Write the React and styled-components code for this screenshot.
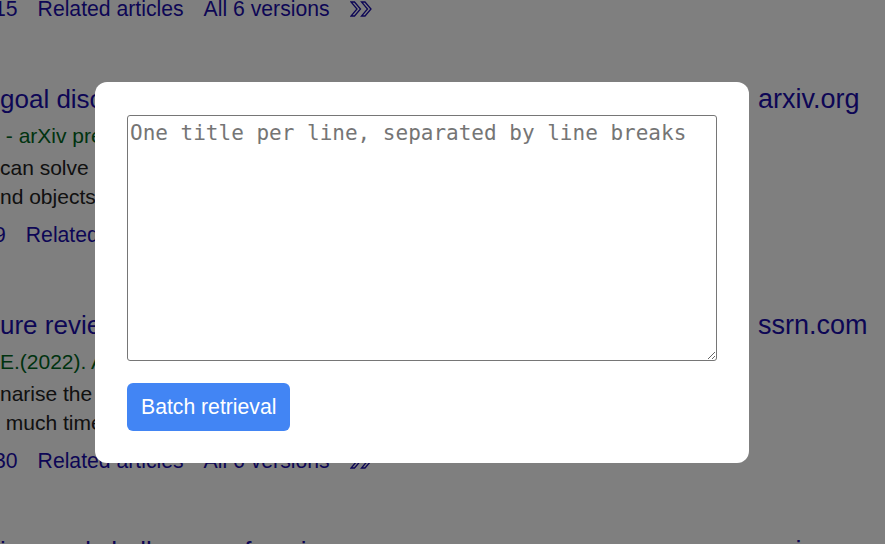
import React from "react";
import styled, { createGlobalStyle } from "styled-components";

const GlobalStyle = createGlobalStyle`
  html, body {
    margin: 0;
    padding: 0;
    background: #ffffff;
    overflow: hidden;
  }
  body {
    font-family: "Liberation Sans", Arial, sans-serif;
  }
`;

const Page = styled.div`
  display: flex;
  flex-direction: column;
  margin-top: -6px;
  width: 885px;
  height: 550px;
  overflow: hidden;
`;

const Result = styled.div`
  display: grid;
  grid-template-columns: 749px auto;
  column-gap: 9px;
  margin-top: 59px;
`;

const Main = styled.div`
  display: flex;
  flex-direction: column;
  overflow: hidden;
  white-space: nowrap;
`;

const Side = styled.div`
  white-space: nowrap;
`;

const Title = styled.a`
  display: block;
  font-size: 26px;
  line-height: 34px;
  color: #1a0dab;
  text-decoration: none;
`;

const SideLink = styled(Title)`
  font-size: 27px;
`;

const Source = styled.div`
  margin-top: 5px;
  font-size: 21px;
  line-height: 29px;
  color: #006621;
`;

const Snippet = styled.div`
  margin-top: ${(p) => (p.$first ? "3px" : "0")};
  font-size: 21px;
  line-height: 29px;
  color: #222222;
`;

const Links = styled.div`
  display: flex;
  align-items: center;
  gap: 20px;
  margin-top: ${(p) => (p.$top ? "0" : "9px")};
  margin-left: -6px;
  font-size: 21.2px;
  line-height: 29px;
  white-space: nowrap;
`;

const LinkItem = styled.a`
  color: #1a0dab;
  text-decoration: none;
`;

const MoreIcon = styled.svg`
  width: 22px;
  height: 16px;
  display: block;
`;

const Overlay = styled.div`
  position: fixed;
  inset: 0;
  background: rgba(0, 0, 0, 0.5);
  display: flex;
  align-items: center;
  justify-content: center;
  padding-right: 41px;
`;

const Dialog = styled.div`
  width: 654px;
  box-sizing: border-box;
  padding: 33px 32px 32px;
  background: #ffffff;
  border-radius: 12px;
  display: flex;
  flex-direction: column;
  align-items: flex-start;
  gap: 22px;
`;

const TitlesInput = styled.textarea`
  display: block;
  box-sizing: border-box;
  width: 100%;
  height: 246px;
  margin: 0;
  padding: 5px 2px 2px;
  border: 1px solid #767676;
  border-radius: 3px;
  font-family: "DejaVu Sans Mono", "Liberation Mono", monospace;
  font-size: 21px;
  color: #000;
  background: #fff;
  resize: both;
  outline: none;

  &::placeholder {
    color: #757575;
  }
`;

const PrimaryButton = styled.button`
  height: 48px;
  padding: 0 14px;
  border: none;
  border-radius: 6px;
  background: #4285f4;
  color: #ffffff;
  font-family: "Liberation Sans", Arial, sans-serif;
  font-size: 21.2px;
  cursor: pointer;
`;

const More = () => (
  <MoreIcon viewBox="0 0 22 16">
    <g fill="none" stroke="#1a0dab" strokeWidth="1.3" strokeLinejoin="miter">
      <polygon points="1,1 4.5,1 10.5,8 4.5,15 1,15 7,8" />
      <polygon points="11.5,1 15,1 21,8 15,15 11.5,15 17.5,8" />
    </g>
  </MoreIcon>
);

const LinkRow = ({ cited, top }) => (
  <Links $top={top}>
    <LinkItem href="#">{cited}</LinkItem>
    <LinkItem href="#">Related articles</LinkItem>
    <LinkItem href="#">All 6 versions</LinkItem>
    <More />
  </Links>
);

const results = [
  {
    title: "goal discovery in open-ended agents",
    side: "arxiv.org",
    source: "\u00a0- arXiv preprint arXiv:2306.01234, 2023",
    snippets: [
      "can solve many tasks by exploring their environment",
      "nd objects. We propose a framework for discovery",
    ],
    cited: "9",
  },
  {
    title: "ure review of large language models",
    side: "ssrn.com",
    source: "E.(2022). Available at SSRN 4012345",
    snippets: [
      "narise the main findings of recent studies",
      "\u00a0much time is spent on reviewing the literature",
    ],
    cited: "30",
  },
  {
    title: "ims and challenges of sonic",
    side: "springer.com",
    source: "",
    snippets: [],
    cited: null,
  },
];

export default function App() {
  return (
    <>
      <GlobalStyle />
      <Page>
        <LinkRow cited="15" top />
        {results.map((r) => (
          <Result key={r.title}>
            <Main>
              <Title href="#">{r.title}</Title>
              {r.source && <Source>{r.source}</Source>}
              {r.snippets.map((s, i) => (
                <Snippet key={i} $first={i === 0}>
                  {s}
                </Snippet>
              ))}
              {r.cited && <LinkRow cited={r.cited} />}
            </Main>
            <Side>
              <SideLink href="#">{r.side}</SideLink>
            </Side>
          </Result>
        ))}
      </Page>
      <Overlay>
        <Dialog>
          <TitlesInput placeholder="One title per line, separated by line breaks" />
          <PrimaryButton type="button">Batch retrieval</PrimaryButton>
        </Dialog>
      </Overlay>
    </>
  );
}
